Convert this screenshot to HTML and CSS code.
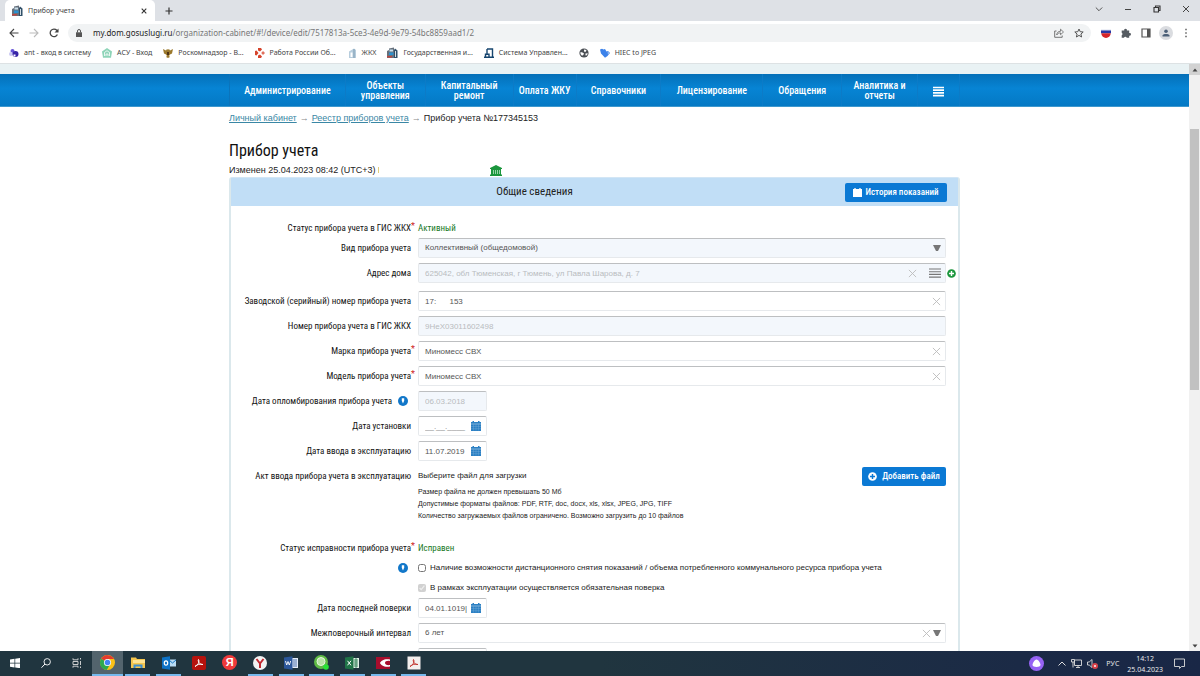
FILE: index.html
```html
<!DOCTYPE html>
<html lang="ru">
<head>
<meta charset="utf-8">
<title>Прибор учета</title>
<link rel="stylesheet" href="styles.css">
</head>
<body>
<svg class="sprite" aria-hidden="true">
  <symbol id="i-cross" viewBox="0 0 10 10"><path d="M1 1l8 8M9 1L1 9" fill="none" stroke="currentColor"/></symbol>
  <symbol id="i-caret" viewBox="0 0 8 6"><path d="M0 0h8L5 6H3z" fill="currentColor"/></symbol>
  <symbol id="i-cal" viewBox="0 0 10 10"><path d="M0 1h1.500V0h1.500v1h4V0h1.500v1H10V10H0z" fill="currentColor"/><path d="M0 3h10" stroke="#fff" stroke-width=".6" opacity=".7"/><path d="M0 5.500h10M0 7.700h10M2.500 3.500v6M5 3.500v6M7.500 3.500v6" stroke="#fff" stroke-width=".4" opacity=".35"/></symbol>
  <symbol id="i-plus" viewBox="0 0 10 10"><circle cx="5" cy="5" r="4.800" fill="currentColor"/><path d="M5 2.200v5.600M2.200 5h5.600" stroke="var(--mark)" stroke-width="1.600"/></symbol>
  <symbol id="i-info" viewBox="0 0 10 10"><circle cx="5" cy="5" r="5" fill="#1177c9"/><path d="M3.800 2.300h2.400v2.500L5 7.500 3.800 4.800z" fill="#fff"/></symbol>
  <symbol id="i-town" viewBox="0 0 11 11"><path d="M0 4l2-1V1.500l5-1V11H0z" fill="#66707c"/><path d="M7 3l1-1.500 2.500 2V11H7z" fill="#315069"/><path d="M2.500 2.500h3.500v2H2.500z" fill="#cbe0ec"/><path d="M2 5.500h4.500v2.500H2z" fill="#2a91d0"/><path d="M0 9h5v1.500H0z" fill="#be453f"/><path d="M8.500 4v6" stroke="#d7e0e6"/></symbol>
</svg>

<header class="browser">
  <div class="tabs">
    <div class="tab">
      <svg class="ic11"><use href="#i-town"/></svg>
      <span class="tab-title">Прибор учета</span>
      <button class="plain" aria-label="Закрыть вкладку"><svg class="ic6" viewBox="0 0 6 6"><path d="M.7.7l4.600 4.600M5.300.7L.7 5.300" stroke="#333" stroke-width="1.100"/></svg></button>
    </div>
    <button class="plain new-tab" aria-label="Новая вкладка"><svg class="ic8" viewBox="0 0 8 8"><path d="M4 .5v7M.5 4h7" stroke="#333" stroke-width="1.200"/></svg></button>
    <div class="window-buttons">
      <button class="plain" aria-label="Поиск вкладок"><svg class="ic8" viewBox="0 0 8 8"><path d="M.8 2.500L4 5.700l3.200-3.200" fill="none" stroke="#555"/></svg></button>
      <button class="plain" aria-label="Свернуть"><svg class="ic8" viewBox="0 0 8 8"><path d="M1 4.500h6" stroke="#444"/></svg></button>
      <button class="plain" aria-label="Восстановить"><svg class="ic8" viewBox="0 0 8 8"><path d="M1 2.500h4.500V7H1zM2.500 2.500V1H7v4.500H5.500" fill="none" stroke="#333" stroke-width="1.100"/></svg></button>
      <button class="plain" aria-label="Закрыть"><svg class="ic8" viewBox="0 0 8 8"><path d="M1 1l6 6M7 1L1 7" stroke="#444"/></svg></button>
    </div>
  </div>
  <div class="toolbar">
    <button class="plain" aria-label="Назад"><svg class="ic10" viewBox="0 0 10 10"><path d="M9.500 5H1M5 1L1 5l4 4" fill="none" stroke="#444" stroke-width="1.100"/></svg></button>
    <button class="plain" aria-label="Вперед"><svg class="ic10" viewBox="0 0 10 10"><path d="M.5 5H9M5 1l4 4-4 4" fill="none" stroke="#bbb" stroke-width="1.100"/></svg></button>
    <button class="plain" aria-label="Обновить"><svg class="ic10" viewBox="0 0 10 10"><path d="M8.400 6.500A3.800 3.800 0 1 1 7.800 2.300L9 3.500" fill="none" stroke="#444" stroke-width="1.300"/><path d="M9.500.5v4h-4z" fill="#444"/></svg></button>
    <div class="address">
      <svg class="ic8" viewBox="0 0 8 8"><path d="M1 3.300h6V8H1z" fill="#555"/><path d="M2.500 3.500V2a1.500 1.500 0 0 1 3 0v1.500" fill="none" stroke="#555"/></svg>
      <span class="url"><b>my.dom.gosuslugi.ru</b>/organization-cabinet/#!/device/edit/7517813a-5ce3-4e9d-9e79-54bc8859aad1/2</span>
      <button class="plain" aria-label="Поделиться"><svg class="ic10" viewBox="0 0 10 10"><path d="M2.500 3H.7v6.300h7.500V7.500" fill="none" stroke="#666" stroke-width=".9"/><path d="M2.700 7c.2-2.500 1.500-3.700 3.800-3.700V1.200L9.500 4 6.500 6.700V4.900C4.700 4.900 3.500 5.500 2.700 7z" fill="none" stroke="#666" stroke-width=".8"/></svg></button>
      <button class="plain" aria-label="В закладки"><svg class="ic10" viewBox="0 0 10 10"><path d="M5 1l1.200 2.700 3 .3-2.300 2 .7 3L5 7.400 2.400 9l.7-3L.8 4l3-.3z" fill="none" stroke="#555" stroke-width="1"/></svg></button>
    </div>
    <div class="extensions">
      <svg class="ic10" viewBox="0 0 10 10"><path d="M0 1.500h10v2H0z" fill="#dde0ef"/><path d="M0 2.500h10v2.800H0z" fill="#2637a5"/><path d="M.3 5.300h9.400A4.700 4.700 0 0 1 .3 5.300z" fill="#d5242a"/></svg>
      <svg class="ic10" viewBox="0 0 10 10"><path d="M.7 2.500h2.500a1.400 1.400 0 1 1 2.700 0h2.300V5a1.400 1.400 0 1 1 0 2.700v2H5.700a1.400 1.400 0 0 0-2.700 0H.7V7.200a1.400 1.400 0 0 0 0-2.500z" fill="#555b61"/></svg>
      <svg class="ic10" viewBox="0 0 10 10"><path d="M1 1h8v8H1z" fill="#fff" stroke="#555" stroke-width="1.200"/><path d="M6 1h3v8H6z" fill="#555"/></svg>
      <span class="avatar"><svg class="ic8" viewBox="0 0 8 8"><circle cx="4" cy="2.200" r="1.800" fill="#4c6078"/><path d="M.5 7.500V6.300C1.500 4.500 6.500 4.500 7.500 6.300v1.200z" fill="#4c6078"/></svg></span>
      <svg class="ic10" viewBox="0 0 10 10"><path d="M4.300.8h1.400v1.400H4.300zM4.300 4.300h1.400v1.400H4.300zM4.300 7.800h1.400v1.400H4.300z" fill="#555"/></svg>
    </div>
  </div>
  <nav class="bookmarks" aria-label="Закладки">
    <a href="#"><svg class="ic10" viewBox="0 0 10 10"><circle cx="3.500" cy="3" r="2" fill="#6554d8"/><circle cx="2" cy="6" r="2" fill="#c9c8f2"/><circle cx="6.500" cy="6" r="3" fill="#3724a7"/><path d="M4.500 6.500h2v2h-2z" fill="#fff"/></svg>ant - вход в систему</a>
    <a href="#"><svg class="ic10" viewBox="0 0 10 10"><path d="M5 0l5 3.600-1 6.200H1L0 3.600z" fill="#8ed4b8"/><path d="M2.500 8V4.500L5 2.700l2.500 1.800V8M4 8V6h2v2" fill="none" stroke="#fff" stroke-width=".8"/></svg>АСУ - Вход</a>
    <a href="#"><svg class="ic10" viewBox="0 0 10 10"><path d="M0 1l3 1.500L4 1l1 .8L6 1l1 1.500L10 1 9 5.500 7 6.500 6 8l1 1-2 1-2-1 1-1-1-1.500L1 5.500z" fill="#9b792d"/><path d="M4 4h2v3H4z" fill="#4e3215"/></svg>Роскомнадзор - В...</a>
    <a href="#"><svg class="ic10" viewBox="0 0 10 10"><path d="M3 0h3l1 1.500-2 2-2-1zM3 10h3l1-1.500-2-2-2 1zM0 3v4l1.500.5 2-2.500-2-2.500z" fill="#d6442c"/><path d="M8 3l2 2-2 2-1.800-2z" fill="#e0705d"/></svg>Работа России Об...</a>
    <a href="#"><svg class="ic10" viewBox="0 0 10 10"><path d="M2 3.500L7 .5 9 2v8H2z" fill="#b7cddd"/><path d="M3.500 4.500h2V9h-2z" fill="#fff"/><path d="M7 1v9" stroke="#7d9bb1"/></svg>ЖКХ</a>
    <a href="#"><svg class="ic11"><use href="#i-town"/></svg>Государственная и...</a>
    <a href="#"><svg class="ic10" viewBox="0 0 10 10"><path d="M3 1h5.500v8M3 1v5M0 9.300h10M1.500 9V6.300h3.500V9" fill="none" stroke="#17466f" stroke-width="1.400"/></svg>Система Управлен...</a>
    <a href="#" aria-label="Сайт"><svg class="ic10" viewBox="0 0 10 10"><circle cx="5" cy="5" r="4.600" fill="#4d5156"/><path d="M1.500 4l2 .5 1.500 1-.7 1.500-1.300.8L1.500 6zM5 1.500l2.500.5L6.500 4 5 3.500zM6.500 5.500l2.300-.3-.8 2-1.500.3z" fill="#fff"/></svg></a>
    <a href="#"><svg class="ic10" viewBox="0 0 10 10"><path d="M0 1.500L2 .8l1.500.7L5 1l1.500 2.500L8 3l2 2-2.500 3L5 9.700 1 5.500z" fill="#3c82ea"/><path d="M7.500 3.500L10 5 8 7z" fill="#93b8ef"/></svg>HIEC to JPEG</a>
  </nav>
</header>

<div class="viewport">
  <main class="page">
    <div class="top-strip"></div>
    <nav class="menu" aria-label="Главное меню">
      <div class="menu-grid">
        <a href="#">Администрирование</a>
        <a href="#">Объекты<br>управления</a>
        <a href="#">Капитальный<br>ремонт</a>
        <a href="#">Оплата ЖКУ</a>
        <a href="#">Справочники</a>
        <a href="#">Лицензирование</a>
        <a href="#">Обращения</a>
        <a href="#">Аналитика и<br>отчеты</a>
        <a href="#" aria-label="Все разделы"><svg class="ic11" viewBox="0 0 11 11"><path d="M0 1.500h11M0 4.200h11M0 6.900h11M0 9.600h11" stroke="#fff" stroke-width="1.700"/></svg></a>
      </div>
    </nav>

    <div class="content">
      <div class="crumbs"><a href="#">Личный кабинет</a><span class="arrow">→</span><a href="#">Реестр приборов учета</a><span class="arrow">→</span><span>Прибор учета №177345153</span></div>
      <h1>Прибор учета</h1>
      <div class="changed"><span>Изменен 25.04.2023 08:42 (UTC+3) <i></i></span>
        <svg class="bank" viewBox="0 0 12 11"><path d="M6 0l6 3v1H0V3zM1 4h10v5.500H1zM0 9.500h12V11H0z" fill="#1b963d"/><path d="M3.500 5v4M5.500 5v4M7.500 5v4M9.500 5v4" stroke="#b9e3c3" stroke-width=".8"/></svg>
      </div>

      <section class="panel">
        <div class="panel-head">
          <h2>Общие сведения</h2>
          <button class="btn"><svg class="ic9"><use href="#i-cal"/></svg>История показаний</button>
        </div>
        <form class="form">
          <div class="row tight"><span class="label req">Статус прибора учета в ГИС ЖКХ</span><span class="state">Активный</span></div>
          <div class="row"><label class="label" for="kind">Вид прибора учета</label>
            <div class="field off"><select id="kind"><option>Коллективный (общедомовой)</option></select><svg class="caret"><use href="#i-caret"/></svg></div></div>
          <div class="row wide"><label class="label" for="addr">Адрес дома</label>
            <div class="field off"><input id="addr" class="dim" value="625042, обл Тюменская, г Тюмень, ул Павла Шарова, д. 7" readonly>
              <button type="button" class="plain" aria-label="Очистить"><svg class="clear"><use href="#i-cross"/></svg></button>
              <button type="button" class="plain list" aria-label="Выбрать"><svg class="lines" viewBox="0 0 12 10"><path d="M0 1h12M0 3.700h12M0 6.400h12M0 9.100h12" stroke="#777" stroke-width="1.100"/></svg></button></div>
            <button type="button" class="plain add" aria-label="Добавить адрес"><svg class="ic9"><use href="#i-plus"/></svg></button></div>
          <div class="row"><label class="label" for="serial">Заводской (серийный) номер прибора учета</label>
            <div class="field"><input id="serial" value="17:&nbsp;&nbsp;&nbsp;&nbsp;&nbsp;&nbsp;153"><button type="button" class="plain" aria-label="Очистить"><svg class="clear"><use href="#i-cross"/></svg></button></div></div>
          <div class="row"><label class="label" for="gis">Номер прибора учета в ГИС ЖКХ</label>
            <div class="field off"><input id="gis" class="dim" value="9HeX03011602498" readonly></div></div>
          <div class="row"><label class="label req" for="brand">Марка прибора учета</label>
            <div class="field"><input id="brand" value="Миномесс СВХ"><button type="button" class="plain" aria-label="Очистить"><svg class="clear"><use href="#i-cross"/></svg></button></div></div>
          <div class="row"><label class="label req" for="model">Модель прибора учета</label>
            <div class="field"><input id="model" value="Миномесс СВХ"><button type="button" class="plain" aria-label="Очистить"><svg class="clear"><use href="#i-cross"/></svg></button></div></div>
          <div class="row"><div class="label"><label for="seal">Дата опломбирования прибора учета</label><svg class="info"><use href="#i-info"/></svg></div>
            <div class="field date off"><input id="seal" class="dim" value="06.03.2018" readonly></div></div>
          <div class="row"><label class="label" for="inst">Дата установки</label>
            <div class="field date"><input id="inst" class="mask" value="__.__.____"><button type="button" class="plain cal" aria-label="Календарь"><svg class="ic10"><use href="#i-cal"/></svg></button></div></div>
          <div class="row"><label class="label" for="start">Дата ввода в эксплуатацию</label>
            <div class="field date"><input id="start" value="11.07.2019"><button type="button" class="plain cal" aria-label="Календарь"><svg class="ic10"><use href="#i-cal"/></svg></button></div></div>
          <div class="row act"><span class="label">Акт ввода прибора учета в эксплуатацию</span>
            <div class="upload">
              <div class="upload-top"><span>Выберите файл для загрузки</span><button type="button" class="btn file"><svg class="ic9"><use href="#i-plus"/></svg>Добавить файл</button></div>
              <p>Размер файла не должен превышать 50 Мб</p>
              <p>Допустимые форматы файлов: PDF, RTF, doc, docx, xls, xlsx, JPEG, JPG, TIFF</p>
              <p>Количество загружаемых файлов ограничено. Возможно загрузить до 10 файлов</p>
            </div></div>
          <div class="row tight"><span class="label req">Статус исправности прибора учета</span><span class="state">Исправен</span></div>
          <div class="row tight"><div class="label"><svg class="info"><use href="#i-info"/></svg></div>
            <label class="check"><input type="checkbox">Наличие возможности дистанционного снятия показаний / объема потребленного коммунального ресурса прибора учета</label></div>
          <div class="row tight"><span class="label"></span>
            <label class="check"><input type="checkbox" checked disabled>В рамках эксплуатации осуществляется обязательная поверка</label></div>
          <div class="row"><label class="label" for="last">Дата последней поверки</label>
            <div class="field date"><input id="last" value="04.01.1019|"><button type="button" class="plain cal" aria-label="Календарь"><svg class="ic10"><use href="#i-cal"/></svg></button></div></div>
          <div class="row"><label class="label" for="gap">Межповерочный интервал</label>
            <div class="field"><select id="gap"><option>6 лет</option></select><button type="button" class="plain near" aria-label="Очистить"><svg class="clear"><use href="#i-cross"/></svg></button><svg class="caret"><use href="#i-caret"/></svg></div></div>
          <div class="row"><span class="label"></span><div class="field date"><input aria-label="Дата"></div></div>
        </form>
      </section>
    </div>
  </main>
  <div class="scroll">
    <div class="scroll-end up"><svg class="ic6" viewBox="0 0 6 6"><path d="M.5 4.500L3 1.500l2.500 3z" fill="#444"/></svg></div>
    <div class="track"><div class="thumb"></div></div>
    <div class="scroll-end"><svg class="ic6" viewBox="0 0 6 6"><path d="M.5 1.500L3 4.500l2.500-3z" fill="#444"/></svg></div>
  </div>
</div>

<footer class="taskbar">
  <div class="apps">
    <button class="plain" aria-label="Пуск"><svg class="ic10" viewBox="0 0 10 10"><path d="M0 1.500l4.500-.7v4H0zM5.200.7L10 0v4.800H5.200zM0 5.400h4.500v4L0 8.700zM5.200 5.400H10v4.800l-4.800-.7z" fill="#fff"/></svg></button>
    <button class="plain" aria-label="Поиск"><svg class="ic10" viewBox="0 0 10 10"><circle cx="6.200" cy="3.800" r="3.200" fill="none" stroke="#fff" stroke-width=".9"/><path d="M4 6L.5 9.700" stroke="#fff"/></svg></button>
    <button class="plain" aria-label="Задачи"><svg class="ic10" viewBox="0 0 10 10"><path d="M1 .3v1.500h5V.3M1 9.700V8.200h5v1.500M1 3.500h5v3H1zM8.500 0v1.500M8.500 8.500V10M8.500 3v4" fill="none" stroke="#ddd" stroke-width=".9"/></svg></button>
    <button class="plain active" aria-label="Chrome"><svg class="ic15" viewBox="0 0 14 14"><circle cx="7" cy="7" r="7" fill="#fbc116"/><path d="M7 7L1 3.400A7 7 0 0 1 13.100 3.800H7z" fill="#e33b2e"/><path d="M7 7L1 3.400A7 7 0 0 0 6.300 14L9.600 8.500z" fill="#2da94f"/><circle cx="7" cy="7" r="3.300" fill="#fff"/><circle cx="7" cy="7" r="2.600" fill="#4285f4"/></svg></button>
    <button class="plain open" aria-label="Проводник"><svg class="ic14" viewBox="0 0 14 14"><path d="M0 1.500h5l1 1.500h8v9H0z" fill="#f5c64f"/><path d="M2 4h12v3H2z" fill="#ffe494"/><path d="M2.500 12V8.500h9V12H9.500v-1.500h-5V12z" fill="#3c8ed0"/></svg></button>
    <button class="plain open" aria-label="Outlook"><svg class="ic14" viewBox="0 0 14 14"><path d="M7 3.500h7v7H7z" fill="#b8dcf4"/><path d="M7 4l3.500 3L14 4" fill="none" stroke="#1777c5"/><path d="M0 1.500L8 .3v13.400L0 12.500z" fill="#0d72c6"/><ellipse cx="4" cy="7" rx="1.700" ry="2.100" fill="none" stroke="#fff" stroke-width="1.200"/></svg></button>
    <button class="plain" aria-label="Acrobat"><svg class="ic14" viewBox="0 0 14 14"><rect width="14" height="14" rx="2" fill="#b5120d"/><path d="M3 10.500C7 8.500 7.500 5 6.500 3.500 5.500 5 7.500 9 11 8.500 8 7.500 5 8.500 3 10.500z" fill="none" stroke="#fff"/></svg></button>
    <button class="plain" aria-label="Яндекс"><span class="ya">Я</span></button>
    <button class="plain open" aria-label="Яндекс Браузер"><svg class="ic14" viewBox="0 0 14 14"><circle cx="7" cy="7" r="7" fill="#f2f2f2"/><path d="M3.500 3L7 7.500V12M10.500 3L7 7.500" fill="none" stroke="#c22830" stroke-width="2"/></svg></button>
    <button class="plain open" aria-label="Word"><svg class="ic14" viewBox="0 0 14 14"><path d="M7 2h7v10H7z" fill="#e5edf8"/><path d="M9 4h4M9 6h4M9 8h4M9 10h4" stroke="#2b579a" stroke-width=".8"/><path d="M0 1.500L8.500.3v13.400L0 12.500z" fill="#2b579a"/><path d="M1.500 5l1.200 4L4 5.500 5.300 9 6.700 5" fill="none" stroke="#fff" stroke-width=".9"/></svg></button>
    <button class="plain open" aria-label="Агент"><svg class="ic15" viewBox="0 0 15 15"><circle cx="7" cy="7" r="7" fill="#5fbb45"/><circle cx="7" cy="6.500" r="4" fill="#b8e3a6" stroke="#e6f6df"/><circle cx="12" cy="12" r="2.800" fill="#28e336"/></svg></button>
    <button class="plain open" aria-label="Excel"><svg class="ic14" viewBox="0 0 14 14"><path d="M7 2h7v10H7z" fill="#e2f1e8"/><path d="M9 4h4M9 6h4M9 8h4M9 10h4M11 2v10" stroke="#207347" stroke-width=".8"/><path d="M0 1.500L8.500.3v13.400L0 12.500z" fill="#207347"/><path d="M2.500 4.800l3.500 4.500M6 4.800L2.500 9.300" stroke="#fff"/></svg></button>
    <button class="plain open" aria-label="КонсультантПлюс"><svg class="ic14" viewBox="0 0 14 14"><path d="M0 1h14v12H0z" fill="#a80d2d"/><path d="M14 3.500C8 2.500 5 5 4 7c1 2 4 4.500 10 3.500V9C11 9.500 9 8.500 9 7s2-2.500 5-2z" fill="#fff"/></svg></button>
    <button class="plain open" aria-label="PDF"><svg class="ic14" viewBox="0 0 14 14"><path d="M.5.500h13v13H.5z" fill="#f4efee"/><path d="M3 10.500C7 8.500 7.500 5 6.500 3.500 5.500 5 7.500 9 11 8.500 8 7.500 5 8.500 3 10.500z" fill="none" stroke="#c3342e"/></svg></button>
  </div>
  <div class="tray">
    <svg class="ic15" viewBox="0 0 15 15"><circle cx="7.500" cy="7.500" r="7.500" fill="#9663f4"/><path d="M7.500 3.500c2 0 4 4 4 5.500 0 2.500-8 2.500-8 0 0-1.500 2-5.500 4-5.500z" fill="#fff"/></svg>
    <svg class="ic8 up-chev" viewBox="0 0 8 8"><path d="M.5 5.500L4 2l3.500 3.500" fill="none" stroke="#ddd"/></svg>
    <svg class="ic11" viewBox="0 0 11 11"><path d="M3.500 2h7v5.500h-7zM5 9.500h4M7 7.500v2M.5 1.500h3v2.500h-3zM2 4v5.500" fill="none" stroke="#ddd" stroke-width=".9"/></svg>
    <svg class="ic11" viewBox="0 0 11 11"><path d="M.5 4h1.700L5 1.500v8L2.200 7H.5z" fill="none" stroke="#ddd" stroke-width=".9"/><circle cx="8" cy="8" r="3" fill="#d7424a"/><path d="M7 7l2 2M9 7L7 9" stroke="#fff" stroke-width=".7"/></svg>
    <span class="lang">РУС</span>
    <span class="clock">14:12<br>25.04.2023</span>
    <svg class="ic11" viewBox="0 0 11 11"><path d="M.5 1h10v7.500h-3L5.500 10.500V8.500h-5z" fill="none" stroke="#ddd" stroke-width=".9"/></svg>
  </div>
</footer>
</body>
</html>
```
FILE: styles.css
```css
* { box-sizing: border-box; }
html, body { height: 100%; }
body {
  margin: 0;
  display: flex;
  flex-direction: column;
  background: #fff;
  color: #222;
  font: 8px/12px "Liberation Sans", Arial, sans-serif;
  overflow: hidden;
}
a { color: inherit; text-decoration: none; }
p, h1, h2 { margin: 0; }
svg { display: block; flex: none; }
.sprite { position: absolute; width: 0; height: 0; }
.plain { display: flex; align-items: center; justify-content: center; padding: 0; border: 0; background: none; }
.ic6 { width: 6px; height: 6px; }
.ic8 { width: 8px; height: 8px; }
.ic9 { width: 9px; height: 9px; }
.ic10 { width: 10px; height: 10px; }
.ic11 { width: 11px; height: 11px; }
.ic14 { width: 14px; height: 14px; }
.ic15 { width: 15px; height: 15px; }

/* Browser frame */
.browser { flex: none; border-bottom: 1px solid #dde2e4; font-family: "Noto Sans", "Open Sans", sans-serif; color: #444; }
.tabs { display: flex; height: 21px; padding-left: 5px; background: #dee1e6; }
.tab { display: flex; align-items: center; gap: 5px; width: 150px; padding: 0 8px 0 7px; background: #fff; border-radius: 5px 5px 0 0; }
.tab-title { flex: 1; font-size: 7px; }
.new-tab { width: 27px; }
.window-buttons { display: flex; gap: 21px; margin-left: auto; padding: 0 10px 3px 0; }
.toolbar { display: flex; align-items: center; height: 23px; padding: 0 9px; gap: 10px; }
.address { display: flex; flex: 1; align-items: center; gap: 10px; height: 18px; margin-left: -1px; padding: 0 7px; border-radius: 9px; background: #f1f3f4; }
.url { flex: 1; font-size: 8px; color: #777; }
.url b { font-weight: 400; color: #222; }
.extensions { display: flex; align-items: center; gap: 10px; }
.avatar { display: flex; align-items: center; justify-content: center; width: 14px; height: 14px; margin: 0 -2px; border-radius: 50%; background: #dadce0; }
.bookmarks { display: flex; align-items: center; gap: 11px; height: 17px; margin-bottom: 2px; padding: 0 9px; font-size: 7px; }
.bookmarks a { display: flex; align-items: center; gap: 5px; }

/* Page area */
.viewport { flex: 1; min-height: 0; display: flex; overflow: hidden; }
.page { flex: 1; overflow: hidden; }
.top-strip { height: 10px; background: #e9f2f4; }
.menu { background: linear-gradient(#0470b8, #0784d4 45%, #0479c4); border-bottom: 1px solid #3d98ce; }
.menu-grid { display: grid; grid-template-columns: 116fr 80fr 88fr 63fr 85fr 102fr 79fr 76fr 42fr; max-width: 731px; margin: 0 auto; border-left: 1px solid #0a74bc; }
.menu a { display: flex; align-items: center; justify-content: center; height: 32px; padding-top: 2px; border-right: 1px solid #0c7bc7; color: #fff; text-align: center; font: 500 10px/10px "Roboto Condensed", "Liberation Sans Narrow", Roboto, sans-serif; }
.content { max-width: 731px; margin: 0 auto; }
.crumbs { display: flex; padding-top: 5px; font-size: 9px; }
.crumbs a { color: #3a87a5; text-decoration: underline; }
.arrow { width: 15px; text-align: center; color: #888; }
h1 { margin-top: 17px; font: 400 16px/20px "Roboto Condensed", "Liberation Sans Narrow", Roboto, sans-serif; color: #111; }
.changed { display: flex; justify-content: space-between; align-items: center; height: 16px; padding: 2px 458px 0 0; font-size: 9px; white-space: nowrap; }
.changed i { display: inline-block; width: 1px; height: 6px; background: #e2cf7c; }
.bank { width: 12px; height: 11px; }

.panel { border: 2px solid #dbe8ec; border-top: 1px solid #d3e6f5; border-radius: 3px 3px 0 0; }
.panel-head { display: grid; grid-template-columns: 1fr auto 1fr; align-items: center; height: 28px; padding: 0 11px; background: #c1def6; }
.panel-head h2 { grid-column: 2; margin-right: 120px; }
h2 { font: 400 11px/16px "Roboto Condensed", "Liberation Sans Narrow", Roboto, sans-serif; color: #222; }
.btn { display: flex; align-items: center; justify-content: center; gap: 3px; height: 19px; padding: 0; border: 0; border-radius: 2px; background: #0b79d4; color: #fff; font: 500 9px/12px "Roboto Condensed", "Liberation Sans Narrow", Roboto, sans-serif; --mark: #0b79d4; }
.panel-head .btn { justify-self: end; width: 102px; }
.btn.file { gap: 5px; width: 84px; }

/* Form rows */
.form { padding: 12px 12px 0 0; }
.row { display: grid; grid-template-columns: 180px minmax(0, 1fr); column-gap: 7px; min-height: 20px; margin-bottom: 5px; position: relative; }
.row.tight { margin-bottom: 0; }
.row.wide { margin-bottom: 8px; }
.row.act { margin-bottom: 16px; }
.label { display: flex; justify-content: flex-end; align-items: center; gap: 6px; height: 20px; position: relative; white-space: nowrap; font: 400 9px/12px "Roboto Condensed", "Liberation Sans Narrow", Roboto, sans-serif; color: #111; }
.req::after { content: "*"; position: absolute; left: 100%; top: 2px; color: #c22; }
.info { width: 10px; height: 10px; margin-right: 3px; }
.state { align-self: center; font: 400 9px/12px "Roboto Condensed", "Liberation Sans Narrow", Roboto, sans-serif; color: #16771c; }
.field { display: flex; align-items: center; height: 20px; padding: 0 4px 0 6px; border: 1px solid #e6e9ec; border-top: 1px solid #bdbfc1; border-radius: 2px; background: #fff; }
.off { background: #f3f7fc; }
.date { width: 69px; }
.field input, .field select { flex: 1; min-width: 0; height: 16px; padding: 0; border: 0; outline: 0; background: none; appearance: none; font: 8px/14px "Liberation Sans", Arial, sans-serif; color: #555; }
.field .dim { color: #b9bcbf; }
.field .mask { color: #888; }
.caret { width: 8px; height: 6px; color: #777; }
.clear { width: 9px; height: 9px; color: #bbb; }
.near { margin-right: 2px; }
.list { margin-left: 12px; }
.lines { width: 12px; height: 10px; }
.cal { color: #2b80c4; margin-right: 1px; }
.add { position: absolute; right: -10px; top: 6px; color: #1b963d; --mark: #fff; }
.upload-top { display: flex; justify-content: space-between; align-items: center; height: 20px; font-size: 8px; }
.upload p { font-size: 7px; }
.check { display: flex; align-items: center; gap: 4px; font-size: 8px; white-space: nowrap; }
.check input { width: 8px; height: 8px; margin: 0; }

/* Scrollbar */
.scroll { display: flex; flex-direction: column; width: 11px; background: #f1f1f1; }
.scroll-end { display: flex; align-items: center; justify-content: center; height: 11px; }
.up { background: #d2d2d2; }
.track { flex: 1; padding: 54px 1px 0; }
.thumb { height: 51%; background: #c1c1c1; }

/* Taskbar */
.taskbar { flex: none; display: flex; justify-content: space-between; height: 25px; background: linear-gradient(90deg, #20353f 0%, #20353f 50%, #1b2a46 85%, #192746 100%); color: #eee; font-family: "Open Sans", "Noto Sans", sans-serif; }
.apps { display: flex; width: 429px; }
.apps button { flex: 1; border-bottom: 2px solid transparent; }
.apps .open { background: linear-gradient(#76b9ed, #76b9ed) center bottom / 25px 2px no-repeat border-box; }
.apps .active { background: #53646d; border-bottom-color: #76b9ed; }
.ya { width: 15px; height: 15px; border-radius: 50%; background: #f03a3a; color: #fff; font: 700 11px/15px "Liberation Sans", sans-serif; text-align: center; }
.tray { display: flex; align-items: center; padding-right: 15px; gap: 5px; font-size: 7px; }
.up-chev { margin-left: 9px; }
.lang { margin-left: 3px; }
.clock { margin: 0 6px 0 3px; line-height: 11px; text-align: center; }
```
